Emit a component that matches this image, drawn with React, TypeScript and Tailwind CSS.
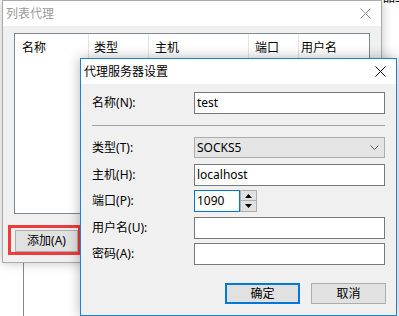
import React from "react";

const font = { fontFamily: '"Noto Sans", "Noto Sans CJK SC", sans-serif' };

function CloseX({ color }: { color: string }) {
  return (
    <svg width="11" height="11" viewBox="0 0 11 11">
      <path d="M0.5 0.5 L10.5 10.5 M10.5 0.5 L0.5 10.5" stroke={color} strokeWidth="1" />
    </svg>
  );
}

function Field({ children }: { children?: React.ReactNode }) {
  return (
    <div className="w-[191px] h-[22px] bg-white border border-[#7a7a7a] flex items-center pl-[2px] text-[12px] text-black">
      {children}
    </div>
  );
}

function Label({ text, acc }: { text: string; acc: string }) {
  return (
    <div className="w-[102px] text-[12px] text-black leading-none">
      {text}({acc}):
    </div>
  );
}

export default function App() {
  return (
    <div className="relative w-[399px] h-[316px] bg-white overflow-hidden" style={font}>
      {/* background window edge */}
      <div className="absolute left-[23px] top-0 w-px h-[316px] bg-[#8a8a8a]" />
      <div className="absolute left-[383px] top-[-11px] text-[12px] text-black whitespace-nowrap">品3</div>

      {/* outer window */}
      <div className="absolute left-[2px] top-0 w-[380px] h-[263px] border border-[#aaaaaa] bg-[#f0f0f0] flex flex-col shadow-[0_0_10px_rgba(0,0,0,0.25)]">
        <div className="h-[25px] bg-white flex items-center justify-between pl-[3px] pr-[10px] shrink-0">
          <span className="text-[12px] text-[#999999]">列表代理</span>
          <CloseX color="#9a9a9a" />
        </div>
        <div className="ml-[11px] mt-[7px] w-[356px] h-[181px] bg-white border border-[#828790] flex flex-col">
          <div className="h-[28px] flex text-[12px] text-black">
            <div className="w-[74px] pl-[7px] flex items-center border-r border-[#e5e5e5]">名称</div>
            <div className="w-[60px] pl-[5px] flex items-center border-r border-[#e5e5e5]">类型</div>
            <div className="w-[100px] pl-[6px] flex items-center border-r border-[#e5e5e5]">主机</div>
            <div className="w-[50px] pl-[6px] flex items-center border-r border-[#e5e5e5]">端口</div>
            <div className="w-[60px] pl-[2px] flex items-center">用户名</div>
          </div>
        </div>
        <div className="ml-[12px] mt-[16px] w-[63px] h-[22px] bg-[#e1e1e1] border border-[#adadad] flex items-center justify-center text-[12px] text-black">
          添加(A)
        </div>
      </div>

      {/* red highlight */}
      <div className="absolute left-[8px] top-[225px] w-[73px] h-[30px] border-[3px] border-[#ee3b3b]" />

      {/* dialog */}
      <div className="absolute left-[80px] top-[58px] w-[317px] h-[258px] border border-[#1883d7] bg-[#f0f0f0] flex flex-col shadow-[0_0_12px_rgba(0,0,0,0.3)]">
        <div className="h-[25px] bg-white flex items-center justify-between pl-[3px] pr-[10px] shrink-0">
          <span className="text-[12px] text-black">代理服务器设置</span>
          <CloseX color="#000000" />
        </div>
        <div className="pl-[11px] flex flex-col">
          <div className="mt-[8px] flex items-center">
            <Label text="名称" acc="N" />
            <Field>test</Field>
          </div>
          <div className="mt-[11px] w-[293px] h-px bg-[#a0a0a0]" />
          <div className="mt-[11px] flex items-center">
            <Label text="类型" acc="T" />
            <div className="w-[191px] h-[21px] bg-[#e5e5e5] border border-[#adadad] flex items-center justify-between pl-[2px] pr-[5px] text-[12px] text-black">
              <span>SOCKS5</span>
              <svg width="9" height="6" viewBox="0 0 9 6">
                <path d="M0.5 0.5 L4.5 4.5 L8.5 0.5" stroke="#555" fill="none" strokeWidth="1" />
              </svg>
            </div>
          </div>
          <div className="mt-[6px] flex items-center">
            <Label text="主机" acc="H" />
            <Field>localhost</Field>
          </div>
          <div className="mt-[4px] flex items-center">
            <Label text="端口" acc="P" />
            <div className="w-[46px] h-[22px] bg-white border border-[#0078d7] flex items-center pl-[2px] text-[12px] text-black">1090</div>
            <div className="w-[17px] h-[22px] flex flex-col">
              <div className="h-[11px] bg-[#e1e1e1] border border-[#adadad] flex items-center justify-center">
                <svg width="7" height="4" viewBox="0 0 7 4"><path d="M0 4 L3.5 0 L7 4 Z" fill="#000" /></svg>
              </div>
              <div className="h-[11px] bg-[#e1e1e1] border border-t-0 border-[#adadad] flex items-center justify-center">
                <svg width="7" height="4" viewBox="0 0 7 4"><path d="M0 0 L3.5 4 L7 0 Z" fill="#000" /></svg>
              </div>
            </div>
          </div>
          <div className="mt-[5px] flex items-center">
            <Label text="用户名" acc="U" />
            <Field />
          </div>
          <div className="mt-[4px] flex items-center">
            <Label text="密码" acc="A" />
            <Field />
          </div>
          <div className="mt-[18px] flex pl-[133px] gap-[11px]">
            <div className="w-[75px] h-[21px] bg-[#e1e1e1] border-2 border-[#0078d7] flex items-center justify-center text-[12px] text-black">确定</div>
            <div className="w-[75px] h-[21px] bg-[#e1e1e1] border border-[#adadad] flex items-center justify-center text-[12px] text-black">取消</div>
          </div>
        </div>
      </div>
    </div>
  );
}
